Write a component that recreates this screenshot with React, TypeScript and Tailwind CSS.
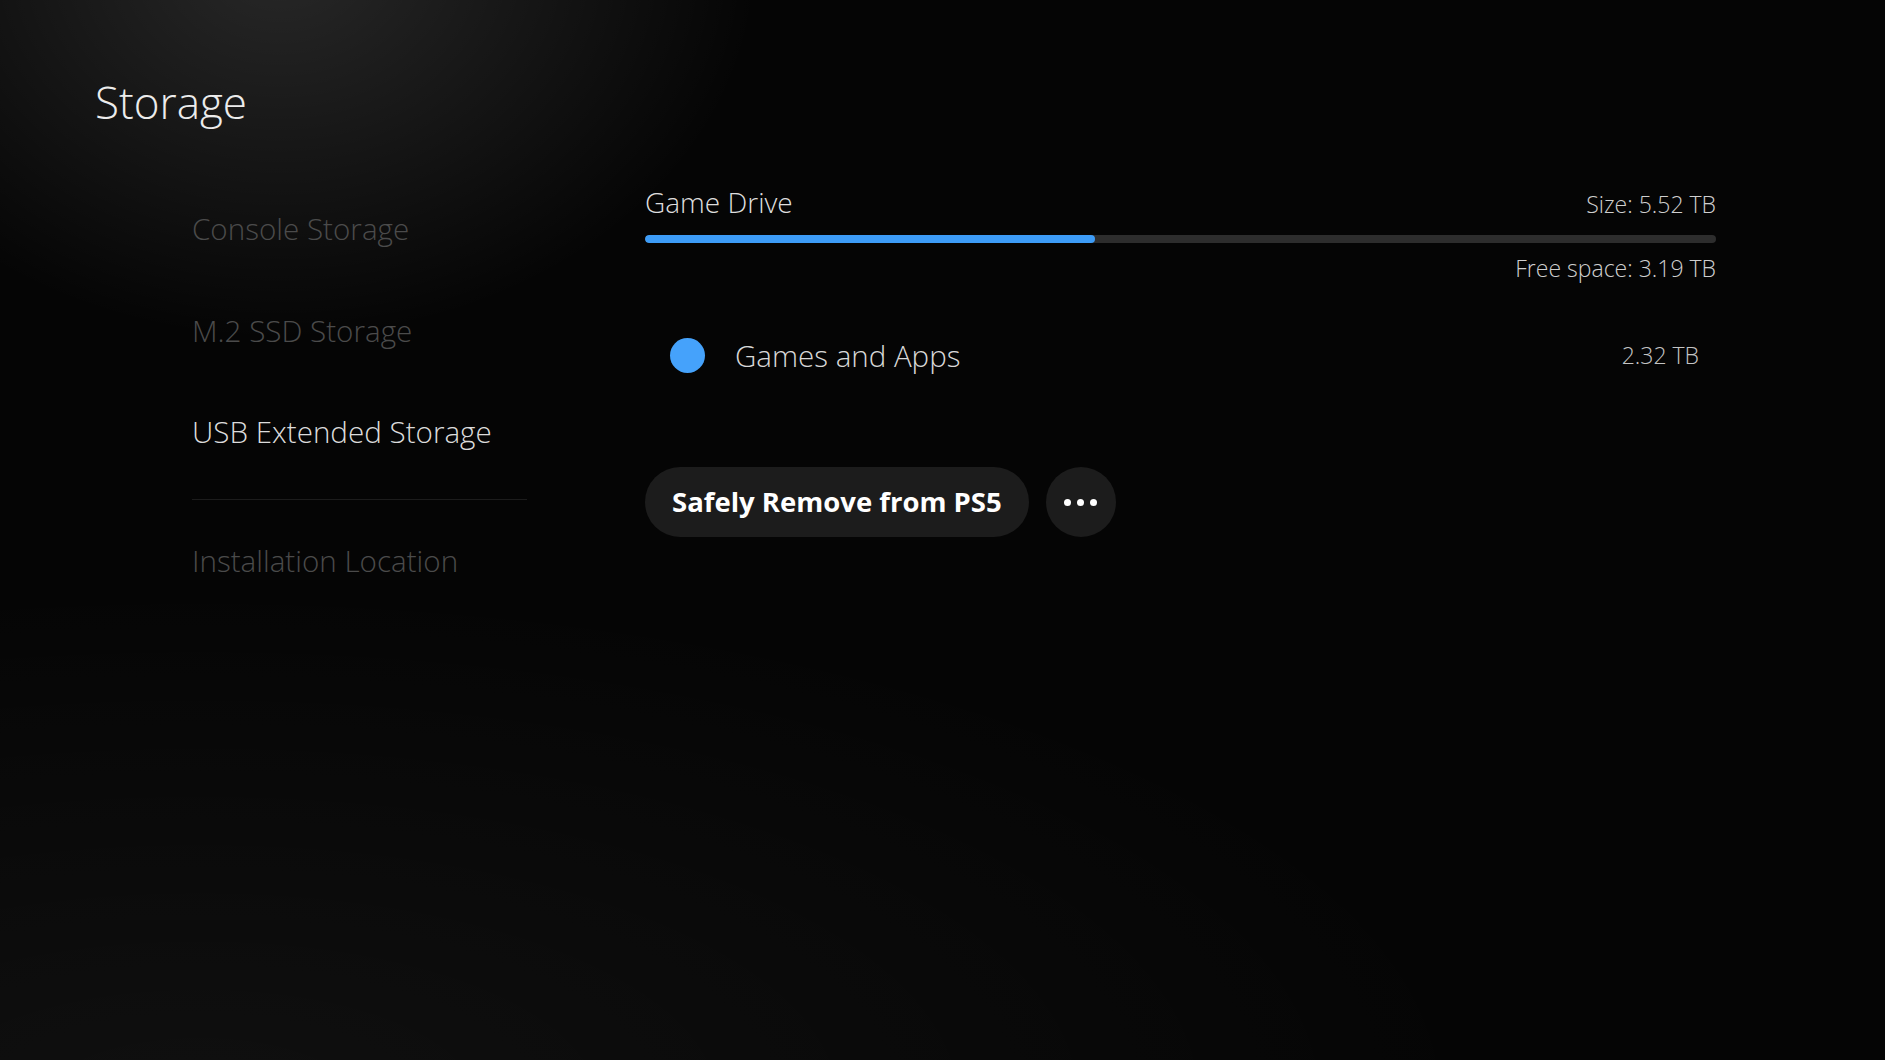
import React from 'react';

const sideItems = [
    { label: 'Console Storage', active: false },
    { label: 'M.2 SSD Storage', active: false },
    { label: 'USB Extended Storage', active: true },
];

const App = () => {
    const usedPercent = 42;

    return (
        <div
            className="relative w-full h-[1060px] overflow-hidden bg-[#050505] font-['Open_Sans',sans-serif] text-[#e6e6e6]"
        >
            {/* Ambient light */}
            <div className="absolute inset-0 bg-[radial-gradient(ellipse_480px_380px_at_280px_-40px,rgba(255,255,255,0.14),transparent)]" />
            <div className="absolute inset-0 bg-[radial-gradient(ellipse_1300px_520px_at_200px_1100px,rgba(255,255,255,0.045),transparent)]" />

            <div className="relative">
                <h1 className="pt-[80px] pl-[95px] text-[44px] leading-none font-light text-[#ececec]">Storage</h1>

                <div className="flex mt-[64px]">
                    {/* Side menu */}
                    <nav className="ml-[192px] w-[335px] pt-[26px] flex flex-col">
                        <div className="flex flex-col gap-[72px]">
                            {sideItems.map((item) => (
                                <div
                                    key={item.label}
                                    className={`text-[29.6px] leading-none font-light ${item.active ? 'text-[#dcdcdc]' : 'text-[#4b4b4b]'}`}
                                >
                                    {item.label}
                                </div>
                            ))}
                        </div>
                        <div className="mt-[52px] h-px bg-[#1c1c1c]" />
                        <div className="mt-[46px] text-[29.6px] leading-none font-light text-[#4b4b4b]">Installation Location</div>
                    </nav>

                    {/* Drive details */}
                    <section className="ml-[118px] w-[1071px] flex flex-col">
                        <div className="flex items-baseline justify-between">
                            <span className="text-[28px] leading-none font-light text-[#dedede]">Game Drive</span>
                            <span className="text-[23px] leading-none font-light text-[#cfcfcf]">Size: 5.52 TB</span>
                        </div>

                        <div className="mt-[19px] h-[8px] rounded-full bg-[#2d2d2d] overflow-hidden">
                            <div className="h-full rounded-full bg-[#3d9cf7]" style={{ width: `${usedPercent}%` }} />
                        </div>

                        <div className="mt-[14px] text-right text-[23px] leading-none font-light text-[#cfcfcf]">Free space: 3.19 TB</div>

                        <div className="mt-[58px] flex items-center h-[35px] pl-[25px] pr-[17px]">
                            <span className="w-[35px] h-[35px] rounded-full bg-[#45a2fb]" />
                            <span className="ml-[30px] text-[29.5px] leading-none font-light text-[#d8d8d8]">Games and Apps</span>
                            <span className="ml-auto text-[23px] leading-none font-light text-[#c4c4c4]">2.32 TB</span>
                        </div>

                        <div className="mt-[94px] flex items-center gap-[17px]">
                            <button className="h-[70px] px-[27px] rounded-full bg-[#1c1c1c] text-[27.5px] leading-none font-bold text-white">
                                Safely Remove from PS5
                            </button>
                            <button className="w-[70px] h-[70px] rounded-full bg-[#1c1c1c] flex items-center justify-center gap-[6px]">
                                <span className="w-[7px] h-[7px] rounded-full bg-white" />
                                <span className="w-[7px] h-[7px] rounded-full bg-white" />
                                <span className="w-[7px] h-[7px] rounded-full bg-white" />
                            </button>
                        </div>
                    </section>
                </div>
            </div>
        </div>
    );
};

export default App;
